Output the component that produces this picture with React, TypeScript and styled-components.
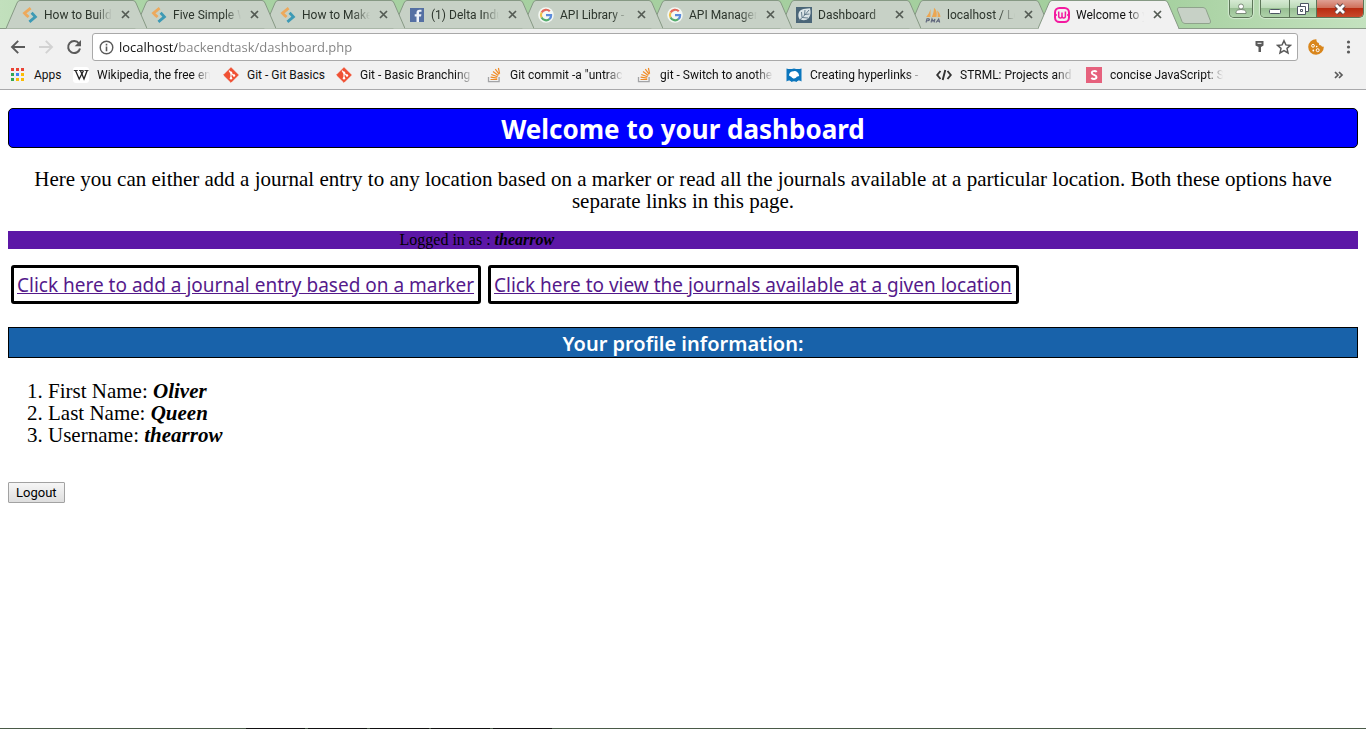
import React from "react";
import styled, { createGlobalStyle } from "styled-components";

const GlobalStyle = createGlobalStyle`
  *, *::before, *::after { box-sizing: border-box; }
  body { margin: 0; background: #fff; }
`;

const ui = `"Open Sans", "Noto Sans", sans-serif`;
const compact = `Roboto, "Open Sans", sans-serif`;
const casual = `"Comic Sans MS", "Noto Sans", "Open Sans", sans-serif`;
const serif = `"Liberation Serif", Georgia, serif`;

const Screen = styled.div`
  min-height: 100vh;
  display: flex;
  flex-direction: column;
  font-family: ${ui};
`;

/* Browser window */

const Chrome = styled.header`
  background: #f1f1f1;
  border-bottom: 1px solid #a9a9ab;
`;

const TabStrip = styled.div`
  display: flex;
  align-items: flex-start;
  height: 29px;
  padding: 0 2px 0 6px;
  background: linear-gradient(90deg, #c2e0bd 0, #a8d3a3 12%, #a5cf9f 60%, #a3cf9d 84%, #b4d8ae 92%, #c4e2bf 100%);
  border-bottom: 1px solid #8a9b88;
`;

const TabItem = styled.div<{ $active?: boolean; $order: number }>`
  position: relative;
  z-index: ${(p) => p.$order};
  display: flex;
  align-items: center;
  gap: 6px;
  flex: 0 0 141px;
  min-width: 0;
  height: 29px;
  margin-right: -12px;
  padding: 0 14px 0 16px;
  color: ${(p) => (p.$active ? "#111" : "#2c352c")};
  > svg { flex: none; }
`;

const TabShape = styled.svg`
  position: absolute;
  inset: 0;
  z-index: -1;
`;

const TabTitle = styled.a`
  flex: 1;
  min-width: 0;
  overflow: hidden;
  white-space: nowrap;
  color: inherit;
  text-decoration: none;
  font: 12px/16px ${compact};
  mask-image: linear-gradient(90deg, #000 76%, transparent 100%);
`;

const PlainButton = styled.button`
  display: flex;
  align-items: center;
  justify-content: center;
  padding: 0;
  border: 0;
  background: none;
  color: #5a5a5a;
`;

const CloseButton = styled(PlainButton)`
  flex: none;
  width: 15px;
  height: 16px;
  color: #545b54;
`;

const NewTab = styled(PlainButton)`
  margin: 7px 0 0 9px;
`;

const WindowControls = styled.div`
  display: flex;
  gap: 7px;
  margin-left: auto;
`;

const ControlGroup = styled.div`
  display: flex;
  border: 1px solid #5d7659;
  border-top: 0;
  border-radius: 0 0 5px 5px;
  overflow: hidden;
  box-shadow: 0 0 1px 1px #d4ead1;
`;

const ControlButton = styled(PlainButton)<{ $width: number; $danger?: boolean }>`
  width: ${(p) => p.$width}px;
  height: 17px;
  background: ${(p) =>
    p.$danger
      ? "linear-gradient(#dfa094 0, #d0715c 45%, #b92c12 50%, #c9492c 100%)"
      : "linear-gradient(#d6ead3 0, #bcdab8 45%, #98bf93 50%, #aed2a9 100%)"};
  & + & { border-left: 1px solid #5d7659; }
`;

const Toolbar = styled.div`
  display: flex;
  align-items: center;
  height: 34px;
  padding: 2px 10px 0 10px;
`;

const NavButtons = styled.nav`
  display: flex;
  gap: 12px;
  margin-right: 10px;
`;

const NavButton = styled(PlainButton)`
  width: 16px;
  height: 16px;
`;

const AddressBox = styled.form`
  display: flex;
  align-items: center;
  flex: 1;
  gap: 5px;
  height: 28px;
  padding: 0 5px 0 6px;
  background: #fff;
  border: 1px solid #a9a9a9;
  border-radius: 3px;
`;

const AddressInput = styled.input`
  flex: 1;
  min-width: 0;
  height: 20px;
  padding: 0;
  border: 0;
  outline: 0;
  font: 13px/20px ${ui};
  color: transparent;
  background: linear-gradient(90deg, #111 58px, #808080 58px);
  background-clip: text;
`;

const ToolbarActions = styled.div`
  display: flex;
  align-items: center;
  gap: 16px;
  margin-left: 10px;
`;

const AddressActions = styled.div`
  display: flex;
  gap: 8px;
`;

const BookmarkBar = styled.nav`
  display: flex;
  align-items: center;
  gap: 13px;
  height: 26px;
  padding: 0 22px 2px 10px;
`;

const Bookmark = styled.a<{ $width: number; $fade?: boolean }>`
  display: flex;
  align-items: center;
  gap: 8px;
  flex: 0 0 ${(p) => p.$width}px;
  min-width: 0;
  color: #111;
  text-decoration: none;
  font: 12px/16px ${compact};
  svg { flex: none; }
  span {
    flex: 1;
    min-width: 0;
    overflow: ${(p) => (p.$fade ? "hidden" : "visible")};
    white-space: nowrap;
    mask-image: ${(p) => (p.$fade ? "linear-gradient(90deg, #000 85%, transparent 100%)" : "none")};
  }
`;

const More = styled(PlainButton)`
  margin-left: auto;
`;

/* Dashboard page */

const Page = styled.main`
  flex: 1;
  padding: 18px 8px;
`;

const Title = styled.h1`
  margin: 0;
  padding-top: 2px;
  border: 1px solid #000;
  border-radius: 5px;
  background: #00f;
  color: #fff;
  text-align: center;
  font: 700 26px/36px ${casual};
`;

const Intro = styled.p`
  margin: 20px 0 19px;
  padding: 0 16px;
  text-align: center;
  font: 21px/22px ${serif};
`;

const LoginBar = styled.p`
  margin: 0;
  padding-left: 29%;
  background: #5c17a6;
  color: #000;
  font: 16px/18px ${serif};
`;

const Actions = styled.nav`
  display: flex;
  gap: 7px;
  margin: 16px 3px 23px;
`;

const ActionLink = styled.a`
  padding: 4px 4px 2px 3px;
  border: 3px solid #000;
  border-radius: 3px;
  color: #551a8b;
  font: 19px/27px ${casual};
  white-space: nowrap;
`;

const SectionTitle = styled.h2`
  margin: 0 0 22px;
  padding-top: 2px;
  border: 1px solid #000;
  background: #1862aa;
  color: #fff;
  text-align: center;
  font: 600 20px/27px ${casual};
`;

const ProfileList = styled.ol`
  margin: 0 0 36px;
  padding-left: 40px;
  font: 21px/22px ${serif};
`;

const Value = styled.em`
  font-weight: 700;
`;

const LogoutButton = styled.button`
  display: block;
  height: 21px;
  padding: 0 7px;
  border: 1px solid #a2a2a2;
  border-radius: 1px;
  background: linear-gradient(#f6f6f6, #dedede);
  color: #000;
  font: 13px/19px Roboto, Arial, sans-serif;
`;

const Taskbar = styled.footer`
  height: 1px;
  background: linear-gradient(90deg, #4a5a48 246px, #111 246px, #111 305px, #4a5a48 305px, #4a5a48 308px, #111 308px, #111 367px, #4a5a48 367px, #4a5a48 370px, #111 370px, #111 429px, #4a5a48 429px, #4a5a48 431px, #111 431px, #111 490px, #4a5a48 490px, #4a5a48 493px, #111 493px, #111 552px, #4a5a48 552px);
`;

/* Icons */

const Icon = ({ children, size = 16 }: { children: React.ReactNode; size?: number }) => (
  <svg width={size} height={size} viewBox="0 0 16 16" fill="none" aria-hidden="true">
    {children}
  </svg>
);

const SitePointIcon = () => (
  <Icon>
    <path d="M8.6 1.2 2.5 6.1l2.2 2.3L6.6 10" stroke="#eda95c" strokeWidth="2.8" />
    <path d="M9.6 5.8 13.4 9.8 7.4 14.9" stroke="#3d9ab5" strokeWidth="2.8" />
  </Icon>
);

const FacebookIcon = () => (
  <Icon>
    <rect x="1" y="1" width="14" height="14" fill="#5570a3" />
    <path d="M10 15V9.600h2l.4-2.300H10V6c0-.8.4-1.200 1.300-1.200h1.200V2.700h-2C8.500 2.700 7.500 3.900 7.500 5.700v1.600H5.700v2.300h1.800V15z" fill="#eef2f8" />
  </Icon>
);

const GoogleIcon = () => (
  <Icon>
    <circle cx="8" cy="8" r="7.800" fill="#f4f8f4" />
    <path d="M3.600 5.500A5.100 5.100 0 0 1 11.800 4.300" stroke="#e36a5c" strokeWidth="2.200" />
    <path d="M3.600 5.500a5.100 5.100 0 0 0 0 5" stroke="#efc14a" strokeWidth="2.200" />
    <path d="M3.600 10.500a5.100 5.100 0 0 0 7.900 1.500" stroke="#55ad6d" strokeWidth="2.200" />
    <path d="M11.300 12.200C12.600 11.200 13.200 9.800 13.100 8.200H8" stroke="#5b8bdb" strokeWidth="2.200" />
  </Icon>
);

const LeafIcon = () => (
  <Icon>
    <rect width="16" height="16" fill="#4b6678" />
    <path d="M2 14.500 3.800 12.500C1.500 9.500 2 4.500 5.500 2.800c2.700-1.300 5-.8 8.500-1.500 1 3.500.9 7.200-1.300 9.700-2.200 2.500-5.700 2.800-8.200 1.200" fill="#dbe5e8" />
    <path d="M3 13.500C6 11 9 8 13 3M6 10.500 5.500 5M8.500 8 9 3M6.500 10.500l5.500.500M9 7.500l4.500-.5" stroke="#4b6678" strokeWidth=".8" />
  </Icon>
);

const PmaIcon = () => (
  <Icon>
    <path d="M5.500 2v8H1.200C3 8 4.700 5 5.500 2zM9 .8c3 2.500 3 6.500 2.500 9.200H6.800C8.200 7 9 4 9 .8zM12 3.500c2.500 2 3.500 4.500 3.400 6.500h-2.800c.3-2.400 0-4.400-.6-6.500z" fill="#eba653" />
    <path d="M1 15.500 2 11.800h1.800c1 0 .9 1.900-1 1.900H1.600M6 15.500l1-3.500 1 2.300L10 12l-.8 3.500M11 15.500l2.700-3.600 1 3.600M12 14.300h2.300" stroke="#60677c" strokeWidth="1.100" />
  </Icon>
);

const WampIcon = () => (
  <Icon>
    <rect x="1" y="1" width="14" height="14" rx="4.500" stroke="#f319a0" strokeWidth="2" />
    <path d="M1 8h2M13 8h2M4.700 4.500V9q0 2 1.700 2T8 9V5.500M8 9q0 2 1.700 2t1.700-2V4.500" stroke="#f319a0" strokeWidth="1.500" />
  </Icon>
);

const AppsIcon = () => (
  <svg width="16" height="16" viewBox="0 0 16 16" aria-hidden="true">
    {["#ea4335", "#ea4335", "#ea4335", "#34a853", "#4285f4", "#fbbc05", "#34a853", "#fbbc05", "#fbbc05"].map((fill, i) => (
      <rect key={i} x={1 + (i % 3) * 5} y={Math.floor(i / 3) * 5 + 1} width="3" height="3" fill={fill} />
    ))}
  </svg>
);

const WikiIcon = () => (
  <Icon>
    <rect width="16" height="16" rx="3" fill="#fff" />
    <path d="M.8 3.500h4M6 3.500h4M11.500 3.500h4" stroke="#222" strokeWidth=".9" />
    <path d="M2.500 3.500 6.200 12 10.600 3.500" stroke="#222" strokeWidth="1.300" />
    <path d="M7.400 3.500 11 12l3.200-8.500" stroke="#222" strokeWidth="1.300" />
  </Icon>
);

const GitIcon = () => (
  <Icon>
    <path d="M8 .7 15.300 8 8 15.300.7 8z" fill="#f05033" stroke="#f05033" strokeLinejoin="round" />
    <path d="M6 3.600 8 5.800v5.700M8 6l3 2.700" stroke="#fff" strokeWidth="1.100" />
    <circle cx="8" cy="5.600" r="1.200" fill="#fff" />
    <circle cx="8" cy="11.300" r="1.200" fill="#fff" />
    <circle cx="11" cy="8.500" r="1.200" fill="#fff" />
  </Icon>
);

const StackIcon = () => (
  <Icon>
    <path d="M2.500 10v4.600h10.600V10" stroke="#a3a4a6" strokeWidth="1.300" />
    <path d="M4.500 12.500h6.700M4.600 10.200l6.600.900M5.300 7.500l6.300 2.200M7 4.500l5.300 3.900M9.300 2.100l3.900 5.200M12.400 1l1.200 5.600" stroke="#f08a24" strokeWidth="1.200" />
  </Icon>
);

const MdnIcon = () => (
  <Icon>
    <path d="M.5 1.500c2.500.8 4.500.8 7.500 0 3 .8 5 .8 7.500 0v13c-2-1.500-3.500-1.500-5 .5-1.500-1-3.500-1-5 0-1.500-2-3-2-5-.5z" fill="#0b76bd" />
    <path d="M3 8.500c0-3 2.500-4.500 5-4.300 2-.8 3 .8 4.500 2.300l.7 2.500-2.500.8c-1 2.200-4 2.200-5.200.2z" fill="#fff" />
  </Icon>
);

const CodeIcon = () => (
  <Icon>
    <path d="M4.500 4 1.200 8l3.300 4M11.500 4l3.300 4-3.300 4M9.300 3 6.700 13" stroke="#333" strokeWidth="1.900" />
  </Icon>
);

const SlidesIcon = () => (
  <Icon>
    <rect width="16" height="16" fill="#e6617d" />
    <path d="M10.700 5C9.700 3.700 5.800 3.500 5.800 6c0 2.200 4.700 1.600 4.700 4.100 0 2.300-3.800 2.400-5.200.7" stroke="#fff" strokeWidth="1.900" />
  </Icon>
);

const CrossIcon = () => (
  <svg width="9" height="9" viewBox="0 0 9 9" fill="none" stroke="currentColor" strokeWidth="1.700" aria-hidden="true">
    <path d="m1 1 7 7M8 1 1 8" />
  </svg>
);

const tabs = [
  { title: "How to Build", icon: <SitePointIcon /> },
  { title: "Five Simple W", icon: <SitePointIcon /> },
  { title: "How to Make", icon: <SitePointIcon /> },
  { title: "(1) Delta Indu", icon: <FacebookIcon /> },
  { title: "API Library -", icon: <GoogleIcon /> },
  { title: "API Manager", icon: <GoogleIcon /> },
  { title: "Dashboard", icon: <LeafIcon /> },
  { title: "localhost / Lo", icon: <PmaIcon /> },
  { title: "Welcome to y", icon: <WampIcon />, active: true },
];

const bookmarks = [
  { title: "Apps", icon: <AppsIcon />, width: 50 },
  { title: "Wikipedia, the free en", icon: <WikiIcon />, width: 137, fade: true },
  { title: "Git - Git Basics", icon: <GitIcon />, width: 100 },
  { title: "Git - Basic Branching", icon: <GitIcon />, width: 137, fade: true },
  { title: "Git commit -a \"untrac", icon: <StackIcon />, width: 137, fade: true },
  { title: "git - Switch to anothe", icon: <StackIcon />, width: 137, fade: true },
  { title: "Creating hyperlinks -", icon: <MdnIcon />, width: 137, fade: true },
  { title: "STRML: Projects and W", icon: <CodeIcon />, width: 137, fade: true },
  { title: "concise JavaScript: Sli", icon: <SlidesIcon />, width: 137, fade: true },
];

const profile = [
  ["First Name", "Oliver"],
  ["Last Name", "Queen"],
  ["Username", "thearrow"],
];

function Tab({ title, icon, active, order }: { title: string; icon: React.ReactNode; active?: boolean; order: number }) {
  return (
    <TabItem $active={active} $order={order}>
      <TabShape width="141" height="29" viewBox="0 0 141 29" aria-hidden="true">
        <path
          d="M0 28.500 11 3Q12 .5 14 .5H127Q129 .5 130 3L141 28.500"
          fill={active ? "#f1f1f1" : "#c7d1c6"}
          stroke="#869984"
        />
        {active && <path d="M1 28.500H140" stroke="#f1f1f1" />}
      </TabShape>
      {icon}
      <TabTitle href="#">{title}</TabTitle>
      <CloseButton aria-label={`Close ${title}`}>
        <CrossIcon />
      </CloseButton>
    </TabItem>
  );
}

export default function App() {
  return (
    <Screen>
      <GlobalStyle />
      <Chrome>
        <TabStrip>
          {tabs.map((tab, i) => (
            <Tab key={i} {...tab} order={tab.active ? 20 : 10 - i} />
          ))}
          <NewTab aria-label="New tab">
            <svg width="36" height="18" viewBox="0 0 36 18" aria-hidden="true">
              <path d="M3 .5H27Q29 .5 30 2.500L34.500 14Q35 16.500 33 16.500H9Q7 16.500 6 14.500L1.500 3Q1 .5 3 .5z" fill="#c7d1c6" stroke="#8fa38c" />
            </svg>
          </NewTab>
          <WindowControls>
            <ControlGroup>
              <ControlButton $width={22} aria-label="Profile">
                <svg width="12" height="11" viewBox="0 0 12 11" fill="#fff" stroke="#657562" strokeWidth=".8" aria-hidden="true">
                  <path d="M1 10.500V8.500Q2 6.500 6 6.500T11 8.500V10.500z" />
                  <circle cx="6" cy="3.500" r="2.500" />
                </svg>
              </ControlButton>
            </ControlGroup>
            <ControlGroup>
              <ControlButton $width={28} aria-label="Minimize">
                <svg width="14" height="12" viewBox="0 0 14 12" fill="#fff" stroke="#4d5663" aria-hidden="true">
                  <rect x="1.500" y="6.500" width="11" height="4" rx="1" />
                </svg>
              </ControlButton>
              <ControlButton $width={27} aria-label="Restore">
                <svg width="14" height="13" viewBox="0 0 14 13" fill="#fff" stroke="#4d5663" aria-hidden="true">
                  <path d="M4.500 1.500h8v8h-8z" />
                  <path d="M1.500 4.500h8v8h-8z" />
                  <path d="M4.500 7.500h2v2h-2z" />
                </svg>
              </ControlButton>
              <ControlButton $width={47} $danger aria-label="Close window">
                <svg width="14" height="12" viewBox="0 0 14 12" fill="none" aria-hidden="true">
                  <path d="m3 2 8 8M11 2l-8 8" stroke="#5c4448" strokeWidth="4.600" />
                  <path d="m3 2 8 8M11 2l-8 8" stroke="#fff" strokeWidth="2.800" />
                </svg>
              </ControlButton>
            </ControlGroup>
          </WindowControls>
        </TabStrip>

        <Toolbar>
          <NavButtons>
            <NavButton aria-label="Back">
              <Icon><path d="M15 8H2.500M8.200 1.800 2 8l6.200 6.200" stroke="#5a5a5a" strokeWidth="1.900" /></Icon>
            </NavButton>
            <NavButton aria-label="Forward">
              <Icon><path d="M1 8h12.500M7.800 1.800 14 8l-6.200 6.200" stroke="#d2d2d2" strokeWidth="1.900" /></Icon>
            </NavButton>
            <NavButton aria-label="Reload">
              <Icon>
                <path d="M13 4.500A6 6 0 1 0 14 9.500" stroke="#5a5a5a" strokeWidth="2" />
                <path d="M15 1v6.300H8.700z" fill="#5a5a5a" />
              </Icon>
            </NavButton>
          </NavButtons>
          <AddressBox>
            <Icon size={15}>
              <circle cx="8" cy="8" r="6.700" stroke="#5a5a5a" strokeWidth="1.500" />
              <path d="M8 7v5M8 4v1.800" stroke="#5a5a5a" strokeWidth="1.700" />
            </Icon>
            <AddressInput aria-label="Address" defaultValue="localhost/backendtask/dashboard.php" />
            <AddressActions>
              <NavButton type="button" aria-label="Saved password">
                <Icon>
                  <path d="M3.500 2h8v4.500l-2.500 1.500v5H6.500V8L3.500 6.500z" fill="#5a5a5a" />
                  <path d="M5.500 4.300h4" stroke="#fff" />
                </Icon>
              </NavButton>
              <NavButton type="button" aria-label="Bookmark this page">
                <Icon><path d="m8 1.700 1.900 4.200 4.600.5L11 9.400l1 4.500-4-2.400-4 2.400 1-4.500L1.500 6.400l4.600-.5z" stroke="#5a5a5a" strokeWidth="1.500" /></Icon>
              </NavButton>
            </AddressActions>
          </AddressBox>
          <ToolbarActions>
            <NavButton aria-label="Cookies">
              <Icon>
                <path d="M8.500.2a7.800 7.800 0 1 0 7.300 7.300c-1.300.6-2.500 0-2.800-1.200-1.500.2-2.500-1-2-2.300C9.500 4 8 2 8.500.2z" fill="#d9861c" />
                <g stroke="#fff">
                  <circle cx="5" cy="6.800" r="1.400" /><circle cx="9.700" cy="11.200" r="1.500" />
                </g>
                <g fill="#fff">
                  <circle cx="5.300" cy="11.500" r=".9" /><circle cx="8.700" cy="7.600" r=".8" />
                </g>
              </Icon>
            </NavButton>
            <NavButton aria-label="Menu">
              <Icon>
                <g fill="#5a5a5a">
                  <circle cx="8.500" cy="3" r="1.600" /><circle cx="8.500" cy="8" r="1.600" /><circle cx="8.500" cy="13" r="1.600" />
                </g>
              </Icon>
            </NavButton>
          </ToolbarActions>
        </Toolbar>

        <BookmarkBar>
          {bookmarks.map(({ title, icon, width, fade }) => (
            <Bookmark key={title} href="#" $width={width} $fade={fade}>
              {icon}
              <span>{title}</span>
            </Bookmark>
          ))}
          <More aria-label="More bookmarks">
            <svg width="10" height="8" viewBox="0 0 10 8" fill="none" stroke="#5a5a5a" strokeWidth="1.700" aria-hidden="true">
              <path d="m1 1 3 3-3 3M5 1l3 3-3 3" />
            </svg>
          </More>
        </BookmarkBar>
      </Chrome>

      <Page>
        <Title>Welcome to your dashboard</Title>
        <Intro>
          Here you can either add a journal entry to any location based on a marker or read all the journals available at a
          particular location. Both these options have separate links in this page.
        </Intro>
        <LoginBar>
          Logged in as : <Value>thearrow</Value>
        </LoginBar>
        <Actions>
          <ActionLink href="#">Click here to add a journal entry based on a marker</ActionLink>
          <ActionLink href="#">Click here to view the journals available at a given location</ActionLink>
        </Actions>
        <SectionTitle>Your profile information:</SectionTitle>
        <ProfileList>
          {profile.map(([label, value]) => (
            <li key={label}>
              {label}: <Value>{value}</Value>
            </li>
          ))}
        </ProfileList>
        <LogoutButton>Logout</LogoutButton>
      </Page>
      <Taskbar />
    </Screen>
  );
}
